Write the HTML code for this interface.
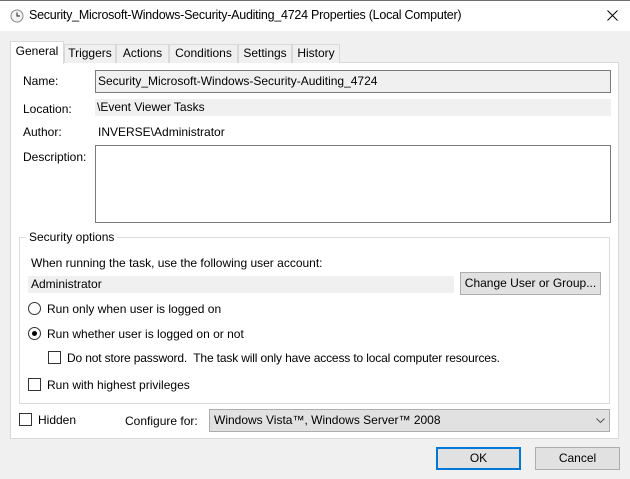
<!DOCTYPE html>
<html><head><style>
*{box-sizing:border-box;margin:0;padding:0}
body{width:630px;height:479px;background:#f0f0f0;font-family:"Liberation Sans",sans-serif;font-size:12px;color:#000;position:relative;overflow:hidden}
.a{position:absolute;white-space:nowrap}
.tab{position:absolute;top:44px;height:19px;border:1px solid #d9d9d9;border-bottom:none;background:#f0f0f0;text-align:center;line-height:16px}
.cb{position:absolute;width:13px;height:13px;border:1px solid #333;background:#fff}
.rb{position:absolute;width:13px;height:13px;border:1px solid #333;border-radius:50%;background:#fff}
.btn{position:absolute;height:23px;border:1px solid #adadad;background:#e1e1e1;text-align:center;line-height:20px}
</style></head><body>
<div class="a" style="left:0;top:0;width:630px;height:31px;background:#fff;border-top:1px solid #6e6e6e"></div>
<svg class="a" style="left:10px;top:9px" width="14" height="14" viewBox="0 0 14 14"><circle cx="7" cy="7" r="6" fill="#f4f4f4" stroke="#888"/><path d="M7 3.5V7h3" stroke="#444" fill="none" stroke-width="1.2"/></svg>
<div class="a" style="left:29px;top:8px;font-size:12.5px;letter-spacing:-0.25px">Security_Microsoft-Windows-Security-Auditing_4724 Properties (Local Computer)</div>
<svg class="a" style="left:607px;top:10px" width="11" height="11"><path d="M0.5 0.5L10.5 10.5M10.5 0.5L0.5 10.5" stroke="#000" stroke-width="1"/></svg>

<div class="a" style="left:10px;top:62px;width:609px;height:377px;background:#fff;border:1px solid #d9d9d9"></div>
<div class="tab" style="left:64px;width:52px">Triggers</div>
<div class="tab" style="left:116px;width:53px">Actions</div>
<div class="tab" style="left:169px;width:69px">Conditions</div>
<div class="tab" style="left:238px;width:54px">Settings</div>
<div class="tab" style="left:292px;width:48px">History</div>
<div class="tab" style="left:10px;top:41px;width:54px;height:23px;background:#fff;line-height:18px">General</div>

<div class="a" style="left:23px;top:74px">Name:</div>
<div class="a" style="left:95px;top:70px;width:516px;height:23px;background:#f0f0f0;border:1px solid #7a7a7a;padding:3px 2px">Security_Microsoft-Windows-Security-Auditing_4724</div>
<div class="a" style="left:23px;top:102px">Location:</div>
<div class="a" style="left:95px;top:99px;width:516px;height:17px;background:#f0f0f0;padding:1px 2px">\Event Viewer Tasks</div>
<div class="a" style="left:23px;top:125px">Author:</div>
<div class="a" style="left:98px;top:125px">INVERSE\Administrator</div>
<div class="a" style="left:23px;top:150px">Description:</div>
<div class="a" style="left:95px;top:145px;width:516px;height:78px;background:#fff;border:1px solid #7a7a7a"></div>

<div class="a" style="left:19px;top:237px;width:591px;height:167px;border:1px solid #dcdcdc"></div>
<div class="a" style="left:26px;top:230px;background:#fff;padding:0 3px">Security options</div>
<div class="a" style="left:31px;top:256px">When running the task, use the following user account:</div>
<div class="a" style="left:28px;top:276px;width:426px;height:17px;background:#f0f0f0;padding:1px 3px">Administrator</div>
<div class="btn" style="left:460px;top:272px;width:141px">Change User or Group...</div>
<div class="rb" style="left:28px;top:302px"></div>
<div class="a" style="left:47px;top:302px">Run only when user is logged on</div>
<div class="rb" style="left:28px;top:327px"></div>
<div class="a" style="left:32px;top:331px;width:5px;height:5px;border-radius:50%;background:#000"></div>
<div class="a" style="left:47px;top:327px">Run whether user is logged on or not</div>
<div class="cb" style="left:48px;top:351px"></div>
<div class="a" style="left:67px;top:351px;letter-spacing:-0.15px">Do not store password.&nbsp; The task will only have access to local computer resources.</div>
<div class="cb" style="left:28px;top:378px"></div>
<div class="a" style="left:47px;top:378px">Run with highest privileges</div>

<div class="cb" style="left:19px;top:413px"></div>
<div class="a" style="left:38px;top:413px">Hidden</div>
<div class="a" style="left:125px;top:414px">Configure for:</div>
<div class="a" style="left:209px;top:409px;width:401px;height:23px;background:#e1e1e1;border:1px solid #adadad;padding:3px 4px">Windows Vista™, Windows Server™ 2008</div>
<svg class="a" style="left:596px;top:418px" width="9" height="6"><path d="M0.5 0.5L4.5 4.5L8.5 0.5" stroke="#555" fill="none"/></svg>

<div class="btn" style="left:436px;top:447px;width:85px;border:2px solid #0078d7;line-height:18px">OK</div>
<div class="btn" style="left:535px;top:447px;width:85px">Cancel</div>
</body></html>
